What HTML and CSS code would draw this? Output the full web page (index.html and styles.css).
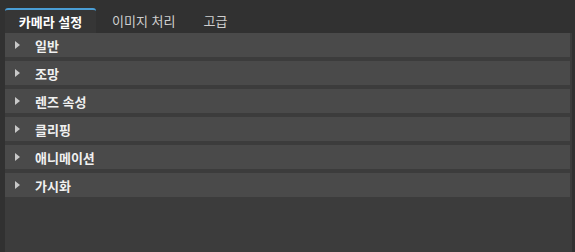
FILE: index.html
```html
<!DOCTYPE html>
<html lang="ko">
<head>
    <meta charset="UTF-8">
    <title>카메라 설정</title>
    <link rel="stylesheet" href="styles.css">
</head>
<body>
    <!-- Onglets -->
    <div class="tabs">
        <div class="tab active">카메라 설정</div>
        <div class="tab">이미지 처리</div>
        <div class="tab">고급</div>
    </div>

    <!-- Sections repliables -->
    <div class="panel">
        <div class="section"><span class="arrow"></span>일반</div>
        <div class="section"><span class="arrow"></span>조망</div>
        <div class="section"><span class="arrow"></span>렌즈 속성</div>
        <div class="section"><span class="arrow"></span>클리핑</div>
        <div class="section"><span class="arrow"></span>애니메이션</div>
        <div class="section"><span class="arrow"></span>가시화</div>
    </div>
</body>
</html>
```

FILE: styles.css
```css
/* Fond sombre */
body {
    margin: 0;
    padding: 8px 3px 0 5px;
    height: 252px;
    box-sizing: border-box;
    background-color: #313131;
    font-family: 'Noto Sans CJK KR', 'Noto Sans', sans-serif;
    font-size: 13px;
    display: flex;
    flex-direction: column;
    overflow: hidden;
}

/* Barre d'onglets */
.tabs {
    display: flex;
    height: 25px;
}

.tab {
    color: #cfcfcf;
    padding: 0 12px 0 16px;
    line-height: 25px;
}

.tab.active {
    width: 91px;
    box-sizing: border-box;
    padding: 0;
    text-align: center;
    color: #ffffff;
    font-weight: 700;
    background-color: #363636;
    border-top: 2px solid #4a9ed6;
    border-radius: 3px 3px 0 0;
    line-height: 23px;
}

/* Contenu */
.panel {
    flex-grow: 1;
    background-color: #3c3c3c;
    padding-right: 2px;
    display: flex;
    flex-direction: column;
    gap: 4px;
}

.section {
    height: 24px;
    background-color: #4a4a4a;
    color: #f0f0f0;
    font-weight: 700;
    display: flex;
    align-items: center;
    padding-left: 10px;
}

.arrow {
    width: 0;
    height: 0;
    border-top: 4px solid transparent;
    border-bottom: 4px solid transparent;
    border-left: 5px solid #c8c8c8;
    margin-right: 15px;
}
```
